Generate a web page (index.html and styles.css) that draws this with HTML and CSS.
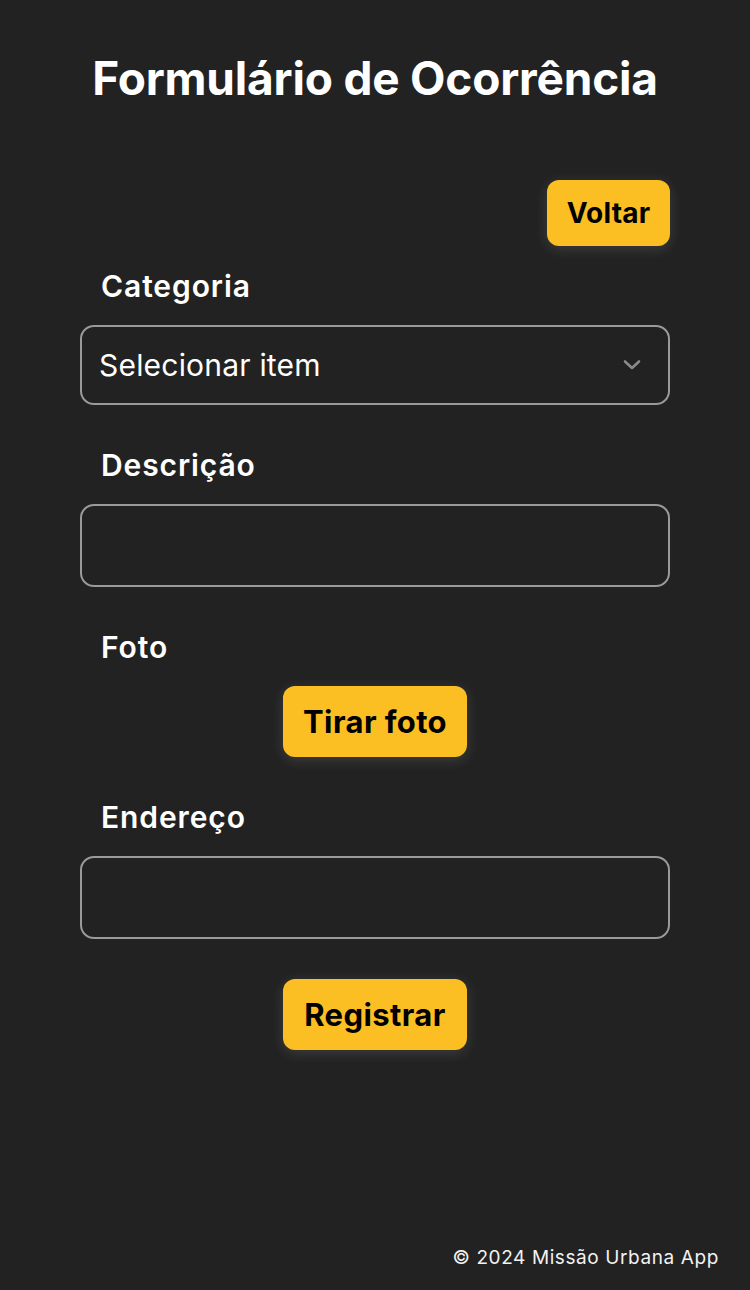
FILE: index.html
```html
<!DOCTYPE html>
<html lang="pt">
<head>
<meta charset="utf-8">
<title>Formulário de Ocorrência</title>
<link rel="stylesheet" href="styles.css">
</head>
<body>
<div class="page">
  <h1 class="title">Formulário de Ocorrência</h1>
  <main class="form">
    <div class="top-row">
      <button class="btn btn-back">Voltar</button>
    </div>
    <div class="field">
      <label class="label">Categoria</label>
      <div class="select">
        <span>Selecionar item</span>
        <svg class="chevron" width="20" height="12" viewBox="0 0 20 12"><path d="M3 2.5 L10 9 L17 2.5" fill="none" stroke="#8a8a8a" stroke-width="2.6" stroke-linecap="round" stroke-linejoin="round"/></svg>
      </div>
    </div>
    <div class="field">
      <label class="label">Descrição</label>
      <div class="input"></div>
    </div>
    <div class="field">
      <label class="label">Foto</label>
      <div class="center"><button class="btn btn-main">Tirar foto</button></div>
    </div>
    <div class="field">
      <label class="label">Endereço</label>
      <div class="input"></div>
    </div>
    <div class="center submit"><button class="btn btn-main">Registrar</button></div>
  </main>
  <footer class="footer">© 2024 Missão Urbana App</footer>
</div>
</body>
</html>
```
FILE: styles.css
```css
* { box-sizing: border-box; }
html, body { margin: 0; padding: 0; background: #222222; }
body { font-family: Inter, "Noto Sans", sans-serif; color: #fff; }
.page { min-height: 1290px; display: flex; flex-direction: column; }
.title {
  margin: 0;
  padding-top: 50px;
  text-align: center;
  font-size: 46px;
  line-height: 56px;
  font-weight: 700;
  letter-spacing: -0.2px;
}
.form { width: 590px; margin: 74px auto 0; display: flex; flex-direction: column; gap: 43px; }
.top-row { display: flex; justify-content: flex-end; margin-bottom: -20px; }
.btn {
  font-family: Inter, "Noto Sans", sans-serif;
  background: #FBBF24;
  color: #000;
  border: none;
  border-radius: 12px;
  font-weight: 700;
  box-shadow: 0 3px 14px rgba(255, 255, 255, 0.13);
  cursor: pointer;
}
.btn-back { width: 123px; height: 66px; font-size: 28px; letter-spacing: 0.2px; }
.btn-main { width: 184px; height: 71px; font-size: 31px; letter-spacing: 0.4px; }
.field { display: flex; flex-direction: column; gap: 22px; }
.label { padding-left: 21px; font-size: 30px; line-height: 34px; font-weight: 600; letter-spacing: 0.9px; }
.select, .input {
  border: 2px solid #9a9a9a;
  border-radius: 14px;
  background: #222;
}
.select {
  height: 80px;
  display: flex;
  align-items: center;
  justify-content: space-between;
  padding: 0 26px 0 17px;
  font-size: 30px;
  font-weight: 400;
  letter-spacing: 0.2px;
}
.input { height: 83px; }
.center { display: flex; justify-content: center; }
.submit { margin-top: -3px; }
.footer {
  margin-top: auto;
  text-align: right;
  padding: 0 31px 20px 0;
  font-size: 19px;
  line-height: 24px;
  letter-spacing: 0.6px;
  color: #f2f2f2;
}
```
